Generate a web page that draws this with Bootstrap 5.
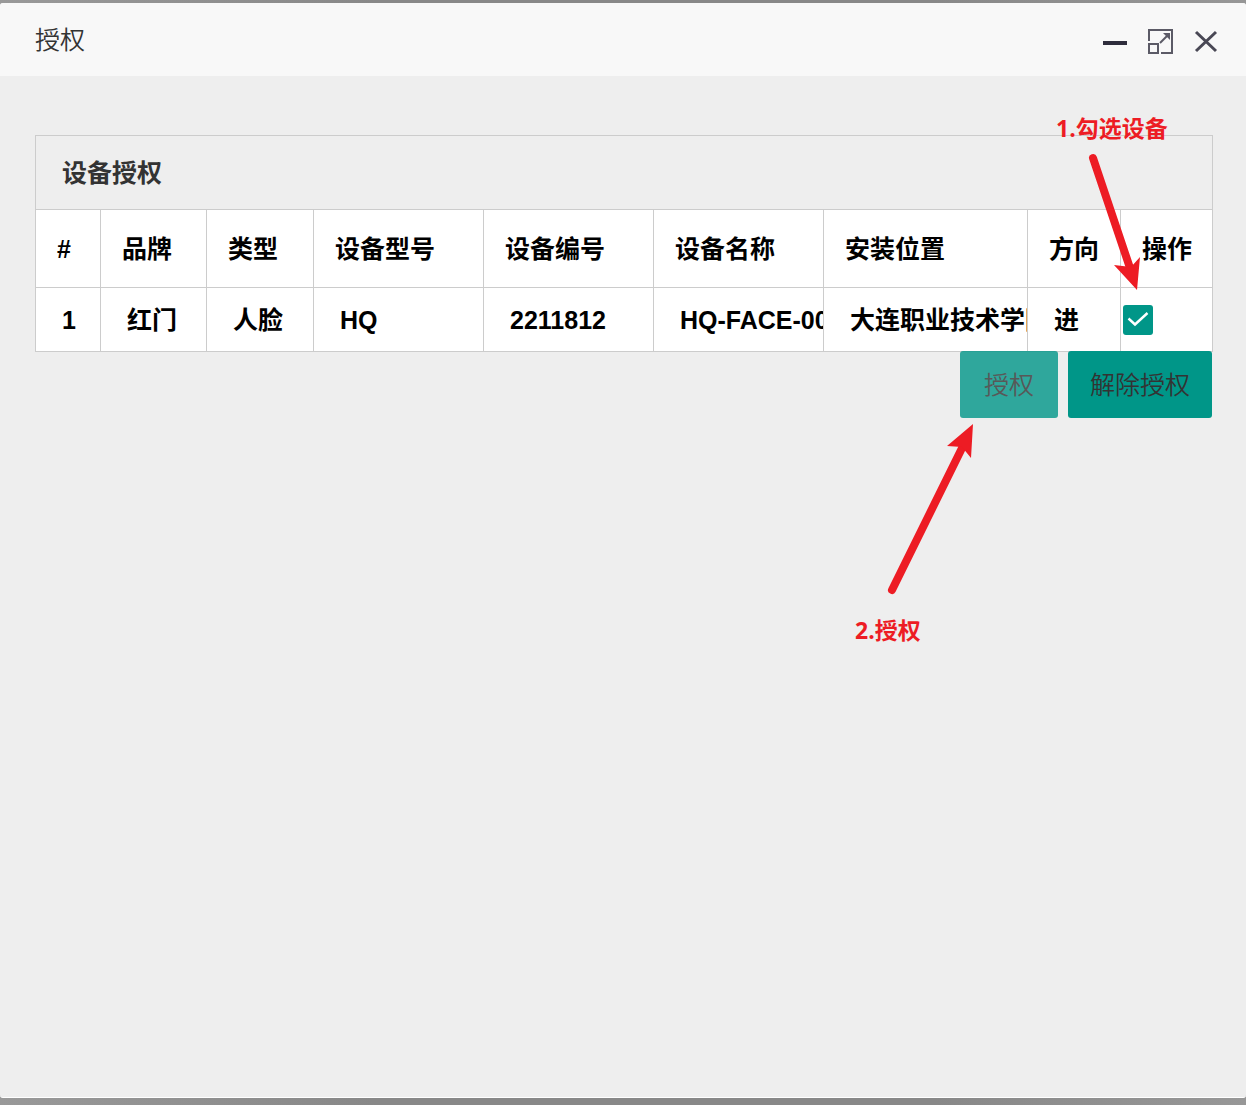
<!DOCTYPE html>
<html lang="zh-CN">
<head>
<meta charset="utf-8">
<meta name="viewport" content="width=device-width, initial-scale=1">
<title>授权</title>
<link href="https://cdn.jsdelivr.net/npm/bootstrap@5.3.0/dist/css/bootstrap.min.css" rel="stylesheet">
<style>
  body { font-family: "Liberation Sans", "Noto Sans CJK SC", sans-serif; font-size: 25px; line-height: 38px; color: #333; background: linear-gradient(90deg, #999, #888 30%, #888 75%, #979797); }
  .dialog-shell { background: #eee; border-bottom: 1px solid #fff; border-radius: 3px; margin: 3px 0 7px; min-height: calc(100vh - 10px); overflow: hidden; }
  .dialog-head { height: 73px; background: #f8f8f8; padding: 0 28px 0 35px; }
  .dialog-title { font-size: 25px; font-weight: 350; line-height: 38px; }
  .tool-set { padding-top: 3px; }
  .tool-btn { width: 28px; height: 28px; color: #2e2d3c; }
  .tool-btn svg { display: block; }
  .dialog-main { padding: 59px 33px 35px 35px; }
  .panel-title { height: 74px; border: 1px solid #ccc; border-bottom: 0; padding: 0 26px; font-size: 25px; font-weight: 700; line-height: 38px; }
  .device-table { table-layout: fixed; border-collapse: collapse; color: #000; font-weight: 700; background: #fff; width: 100%; }
  .device-table th, .device-table td { border: 1px solid #ccc; overflow: hidden; white-space: nowrap; vertical-align: middle; }
  .device-table th { height: 78px; padding: 0 0 0 21px; }
  .device-table td { height: 64px; padding: 0 0 0 26px; }
  .device-table td.pick-cell { padding: 0 0 0 2px; }
  .w-no { width: 65px; } .w-brand { width: 106px; } .w-kind { width: 107px; } .w-code { width: 170px; } .w-dir { width: 93px; } .w-act { width: 92px; }
  .pick-cell .form-check-input { display: block; width: 30px; height: 30px; margin: 0; border: 0; border-radius: 3px; }
  .pick-cell .form-check-input:checked { background-color: #009688; background-size: 30px 30px; background-image: url("data:image/svg+xml,%3csvg xmlns='http://www.w3.org/2000/svg' viewBox='0 0 30 30'%3e%3cpath fill='none' stroke='white' stroke-width='2.4' d='M5.500 13.500l6.500 6 12.500-11.500'/%3e%3c/svg%3e"); }
  .action-bar { gap: 10px; margin: -1px 1px 0 0; }
  .action-btn { --bs-btn-color: #333; --bs-btn-bg: #009688; --bs-btn-hover-bg: #33ab9f; --bs-btn-hover-color: #333; height: 67px; padding: 0 22px; border: 0; border-radius: 3px; font-size: 25px; font-weight: 350; line-height: 38px; }
  .action-btn.is-faded { opacity: .8; padding: 0 24px; }
  .note { position: absolute; pointer-events: none; color: #ed1c24; fill: #ed1c24; font: 700 23px/32px "Open Sans", "Noto Sans CJK SC", sans-serif; white-space: nowrap; }
  .note svg { display: block; }
  .note-pick { right: 21px; top: -23px; width: 136px; }
  .note-pick svg { margin: 7px 0 0 22px; }
  .note-grant { right: 234px; top: 287px; width: 124px; }
  .note-grant svg { margin: 0 0 19px 32px; }
</style>
</head>
<body>
<main class="dialog-shell">
  <header class="dialog-head d-flex align-items-center justify-content-between">
    <h1 class="dialog-title mb-0">授权</h1>
    <div class="tool-set d-flex align-items-center gap-3">
      <button type="button" class="tool-btn btn p-0 border-0" aria-label="最小化">
        <svg width="28" height="28"><path d="M1 14h24v4H1z" fill="currentColor"/></svg>
      </button>
      <button type="button" class="tool-btn btn p-0 border-0" aria-label="最大化">
        <svg width="28" height="28" fill="none" stroke="#5b5a66" stroke-width="2"><path d="M3 14V3h23v23H15"/><path d="M3 17h9v9H3z"/><path d="M14 16l9-9"/><path d="M17 6h7v7z" fill="#5b5a66" stroke="none"/></svg>
      </button>
      <button type="button" class="tool-btn btn p-0 border-0" aria-label="关闭">
        <svg width="28" height="28" fill="none" stroke="#494855" stroke-width="3"><path d="M6 5l20 19M26 5L6 24"/></svg>
      </button>
    </div>
  </header>
  <div class="dialog-main">
    <section class="position-relative">
      <h2 class="panel-title mb-0 d-flex align-items-center">设备授权</h2>
      <table class="device-table">
        <colgroup>
          <col class="w-no"><col class="w-brand"><col class="w-kind"><col class="w-code"><col class="w-code"><col class="w-code"><col><col class="w-dir"><col class="w-act">
        </colgroup>
        <thead>
          <tr><th scope="col">#</th><th scope="col">品牌</th><th scope="col">类型</th><th scope="col">设备型号</th><th scope="col">设备编号</th><th scope="col">设备名称</th><th scope="col">安装位置</th><th scope="col">方向</th><th scope="col">操作</th></tr>
        </thead>
        <tbody>
          <tr><td>1</td><td>红门</td><td>人脸</td><td>HQ</td><td>2211812</td><td>HQ-FACE-00</td><td>大连职业技术学院</td><td>进</td><td class="pick-cell"><input class="form-check-input" type="checkbox" aria-label="选择设备 2211812" checked></td></tr>
        </tbody>
      </table>
      <div class="action-bar d-flex justify-content-end">
        <button type="button" class="action-btn is-faded btn">授权</button>
        <button type="button" class="action-btn btn">解除授权</button>
      </div>
      <div class="note note-pick">
        <div>1.勾选设备</div>
        <svg width="70" height="142" viewBox="0 0 70 142"><path d="M15 7L53 120" stroke="#ed1c24" stroke-width="8" stroke-linecap="round"/><path d="M36 114l17 2 9-10-3 33z"/></svg>
      </div>
      <div class="note note-grant">
        <svg width="90" height="173" viewBox="0 0 90 173"><path d="M5 168L77 22" stroke="#ed1c24" stroke-width="8" stroke-linecap="round"/><path d="M60 24l15 1 9 11 2-34z"/></svg>
        <div>2.授权</div>
      </div>
    </section>
  </div>
</main>
<script src="https://cdn.jsdelivr.net/npm/bootstrap@5.3.0/dist/js/bootstrap.bundle.min.js"></script>
</body>
</html>
